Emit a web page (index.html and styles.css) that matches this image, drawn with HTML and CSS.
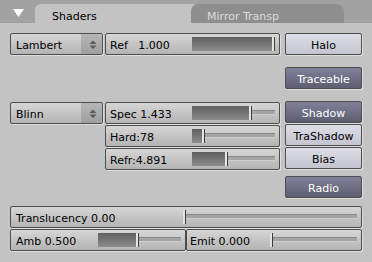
FILE: index.html
```html
<!DOCTYPE html>
<html>
<head>
<meta charset="utf-8">
<link rel="stylesheet" href="styles.css">
</head>
<body>
<div class="panel">
  <div class="header">
    <div class="collapse"><svg width="11" height="8" viewBox="0 0 11 8"><polygon points="0,0 11,0 5.5,8" fill="#ffffff"/></svg></div>
    <div class="tab tab-active">Shaders</div>
    <div class="tab tab-inactive">Mirror Transp</div>
  </div>
  <div class="content">
    <div class="top">
      <div class="col col-left">
        <div class="btn menu"><span class="lbl">Lambert</span><span class="arrows"><svg width="21" height="20" viewBox="0 0 21 20"><polygon points="8.5,10 15.5,10 12,6.5" fill="#5a5a5a"/><polygon points="8.5,11.5 15.5,11.5 12,15" fill="#5a5a5a"/></svg></span></div>
        <div class="btn menu gap-lg"><span class="lbl">Blinn</span><span class="arrows"><svg width="21" height="20" viewBox="0 0 21 20"><polygon points="8.5,10 15.5,10 12,6.5" fill="#5a5a5a"/><polygon points="8.5,11.5 15.5,11.5 12,15" fill="#5a5a5a"/></svg></span></div>
      </div>
      <div class="col col-mid">
        <div class="btn slider"><span class="lbl">Ref   1.000</span><div class="track t-mid"><div class="fill" style="width:80px"></div><div class="handle"></div><div class="groove"></div></div></div>
        <div class="btn slider gap-lg"><span class="lbl">Spec 1.433</span><div class="track t-mid"><div class="fill" style="width:57px"></div><div class="handle"></div><div class="groove"></div></div></div>
        <div class="btn slider gap-sm"><span class="lbl">Hard:78</span><div class="track t-mid"><div class="fill" style="width:10px"></div><div class="handle"></div><div class="groove"></div></div></div>
        <div class="btn slider gap-sm"><span class="lbl">Refr:4.891</span><div class="track t-mid"><div class="fill" style="width:33px"></div><div class="handle"></div><div class="groove"></div></div></div>
      </div>
      <div class="col col-right">
        <div class="btn toggle off"><span class="lbl">Halo</span></div>
        <div class="btn toggle on gap-md"><span class="lbl">Traceable</span></div>
        <div class="btn toggle on gap-md"><span class="lbl">Shadow</span></div>
        <div class="btn toggle off gap-sm"><span class="lbl">TraShadow</span></div>
        <div class="btn toggle off gap-sm"><span class="lbl">Bias</span></div>
        <div class="btn toggle on gap-radio"><span class="lbl">Radio</span></div>
      </div>
    </div>
    <div class="bottom">
      <div class="btn slider wide"><span class="lbl">Translucency 0.00</span><div class="track t-wide"><div class="fill" style="width:0px"></div><div class="handle"></div><div class="groove"></div></div></div>
      <div class="pair gap-sm">
        <div class="btn slider half"><span class="lbl">Amb 0.500</span><div class="track t-mid"><div class="fill" style="width:38px"></div><div class="handle"></div><div class="groove"></div></div></div>
        <div class="btn slider half emit"><span class="lbl">Emit 0.000</span><div class="track t-emit"><div class="fill" style="width:0px"></div><div class="handle"></div><div class="groove"></div></div></div>
      </div>
    </div>
  </div>
</div>
</body>
</html>
```

FILE: styles.css
```css
html, body {
  margin: 0;
  padding: 0;
}
body {
  width: 372px;
  height: 262px;
  overflow: hidden;
  background: #c3c3c3;
  font-family: "DejaVu Sans", "Bitstream Vera Sans", sans-serif;
  font-size: 11px;
  color: #000;
}
.panel {
  width: 372px;
  height: 262px;
  display: flex;
  flex-direction: column;
}
.header {
  flex: none;
  height: 23px;
  background: #a2a2a2;
  display: flex;
  align-items: flex-end;
}
.collapse {
  width: 35px;
  height: 23px;
  box-sizing: border-box;
  padding: 9px 0 0 13px;
  align-self: flex-start;
}
.collapse svg {
  display: block;
}
.tab {
  height: 19px;
  box-sizing: border-box;
  padding-top: 3px;
  line-height: 19px;
  white-space: nowrap;
}
.tab-active {
  width: 160px;
  background: #c3c3c3;
  border-radius: 6px 0 0 0;
  padding-left: 17px;
}
.tab-inactive {
  width: 153px;
  margin-left: -4px;
  background: #8e8e8e;
  color: #dcdcdc;
  border-radius: 7px 8px 0 0;
  padding-left: 16px;
}
.content {
  flex: 1;
  padding: 10px 0 0 10px;
  border-left: 1px solid #b0b0b0;
  margin-left: -1px;
}
.top {
  display: flex;
  align-items: flex-start;
}
.col {
  display: flex;
  flex-direction: column;
}
.col-left {
  width: 93px;
}
.col-mid {
  width: 175px;
  margin-left: 2px;
}
.col-right {
  width: 77px;
  margin-left: 5px;
}
.btn {
  height: 22px;
  box-sizing: border-box;
  border: 1px solid #4e4e4e;
  border-radius: 2px;
  background: linear-gradient(#d6d6d6, #b4b4b4);
  box-shadow: 1px 1px 0 #dedede;
  display: flex;
}
.lbl {
  flex: none;
  padding: 2px 0 0 5px;
  line-height: 19px;
  white-space: pre;
}
.col-mid .lbl {
  padding-left: 4px;
}
.emit .lbl {
  padding-left: 3px;
}
.gap-sm {
  margin-top: 1px;
}
.gap-md {
  margin-top: 12px;
}
.gap-lg {
  margin-top: 47px;
}
.gap-radio {
  margin-top: 7px;
}
.arrows {
  margin-left: auto;
  width: 21px;
  align-self: stretch;
  background: linear-gradient(#b6b6b6, #9f9f9f);
}
.arrows svg {
  display: block;
}
.toggle .lbl {
  flex: 1;
  padding-left: 0;
  text-align: center;
}
.toggle.off {
  background: linear-gradient(#dedee8, #c4c4d0);
}
.toggle.on {
  background: linear-gradient(#80809a, #5e5e72);
  color: #fff;
}
.track {
  margin-left: auto;
  margin-right: 4px;
  margin-top: 3px;
  height: 14px;
  display: flex;
  align-items: flex-start;
  flex: none;
}
.t-mid {
  width: 83px;
}
.t-wide {
  width: 174px;
}
.t-emit {
  width: 87px;
}
.fill {
  flex: none;
  height: 14px;
  background: linear-gradient(#5f5f5f, #8c8c8c);
}
.handle {
  flex: none;
  width: 2px;
  height: 14px;
  background: #e4e4e4;
  border-right: 1px solid #3c3c3c;
}
.groove {
  flex: 1;
  height: 3px;
  margin-top: 4px;
  background: #a4a4a4;
  border-top: 1px solid #8a8a8a;
  border-bottom: 1px solid #cdcdcd;
}
.bottom {
  margin-top: 8px;
  width: 352px;
  display: flex;
  flex-direction: column;
}
.wide {
  width: 352px;
}
.pair {
  display: flex;
}
.half {
  width: 176px;
}
```
